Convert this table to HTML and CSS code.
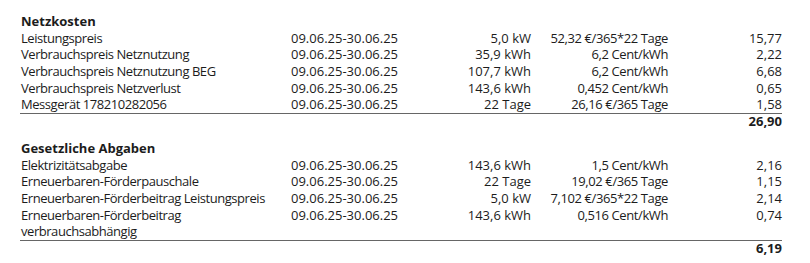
FILE: index.html
```html
<!DOCTYPE html>
<html lang="de">
<head>
    <meta charset="UTF-8">
    <title>Netzkosten</title>
    <link rel="stylesheet" href="styles.css">
</head>
<body>
    <div class="invoice">
        <div class="group">
            <h2>Netzkosten</h2>
            <div class="row">
                <div class="label">Leistungspreis</div>
                <div>09.06.25-30.06.25</div>
                <div class="num">5,0 kW</div>
                <div class="num rate">52,32 €/365*22 Tage</div>
                <div class="num">15,77</div>
            </div>
            <div class="row">
                <div class="label">Verbrauchspreis Netznutzung</div>
                <div>09.06.25-30.06.25</div>
                <div class="num">35,9 kWh</div>
                <div class="num rate">6,2 Cent/kWh</div>
                <div class="num">2,22</div>
            </div>
            <div class="row">
                <div class="label">Verbrauchspreis Netznutzung BEG</div>
                <div>09.06.25-30.06.25</div>
                <div class="num">107,7 kWh</div>
                <div class="num rate">6,2 Cent/kWh</div>
                <div class="num">6,68</div>
            </div>
            <div class="row">
                <div class="label">Verbrauchspreis Netzverlust</div>
                <div>09.06.25-30.06.25</div>
                <div class="num">143,6 kWh</div>
                <div class="num rate">0,452 Cent/kWh</div>
                <div class="num">0,65</div>
            </div>
            <div class="row last">
                <div class="label">Messgerät 178210282056</div>
                <div>09.06.25-30.06.25</div>
                <div class="num">22 Tage</div>
                <div class="num rate">26,16 €/365 Tage</div>
                <div class="num">1,58</div>
            </div>
            <div class="sum">26,90</div>
        </div>

        <div class="group">
            <h2>Gesetzliche Abgaben</h2>
            <div class="row">
                <div class="label">Elektrizitätsabgabe</div>
                <div>09.06.25-30.06.25</div>
                <div class="num">143,6 kWh</div>
                <div class="num rate">1,5 Cent/kWh</div>
                <div class="num">2,16</div>
            </div>
            <div class="row">
                <div class="label">Erneuerbaren-Förderpauschale</div>
                <div>09.06.25-30.06.25</div>
                <div class="num">22 Tage</div>
                <div class="num rate">19,02 €/365 Tage</div>
                <div class="num">1,15</div>
            </div>
            <div class="row">
                <div class="label">Erneuerbaren-Förderbeitrag Leistungspreis</div>
                <div>09.06.25-30.06.25</div>
                <div class="num">5,0 kW</div>
                <div class="num rate">7,102 €/365*22 Tage</div>
                <div class="num">2,14</div>
            </div>
            <div class="row last">
                <div class="label">Erneuerbaren-Förderbeitrag verbrauchsabhängig</div>
                <div>09.06.25-30.06.25</div>
                <div class="num">143,6 kWh</div>
                <div class="num rate">0,516 Cent/kWh</div>
                <div class="num">0,74</div>
            </div>
            <div class="sum">6,19</div>
        </div>
    </div>
</body>
</html>
```

FILE: styles.css
```css
body {
    margin: 0;
    background-color: #fff;
    color: #1c1c1c;
    font-family: "Open Sans", "Noto Sans", sans-serif;
    font-size: 13px;
}
.invoice {
    width: 762px;
    margin-left: 20px;
    padding-top: 13px;
}
.group {
    margin-bottom: 12px;
}
.group h2 {
    margin: 0;
    padding-left: 1px;
    font-size: 13px;
    font-weight: bold;
    line-height: 16.67px;
}
.row {
    display: grid;
    grid-template-columns: 271px 120px 120px 137px 114px;
    line-height: 16.67px;
}
.label {
    padding-left: 1px;
    padding-right: 10px;
    letter-spacing: -0.45px;
}
.rate {
    letter-spacing: -0.4px;
}
.num {
    text-align: right;
}
.last {
    border-bottom: 1px solid #666;
}
.sum {
    text-align: right;
    font-weight: bold;
    line-height: 14px;
}
```
